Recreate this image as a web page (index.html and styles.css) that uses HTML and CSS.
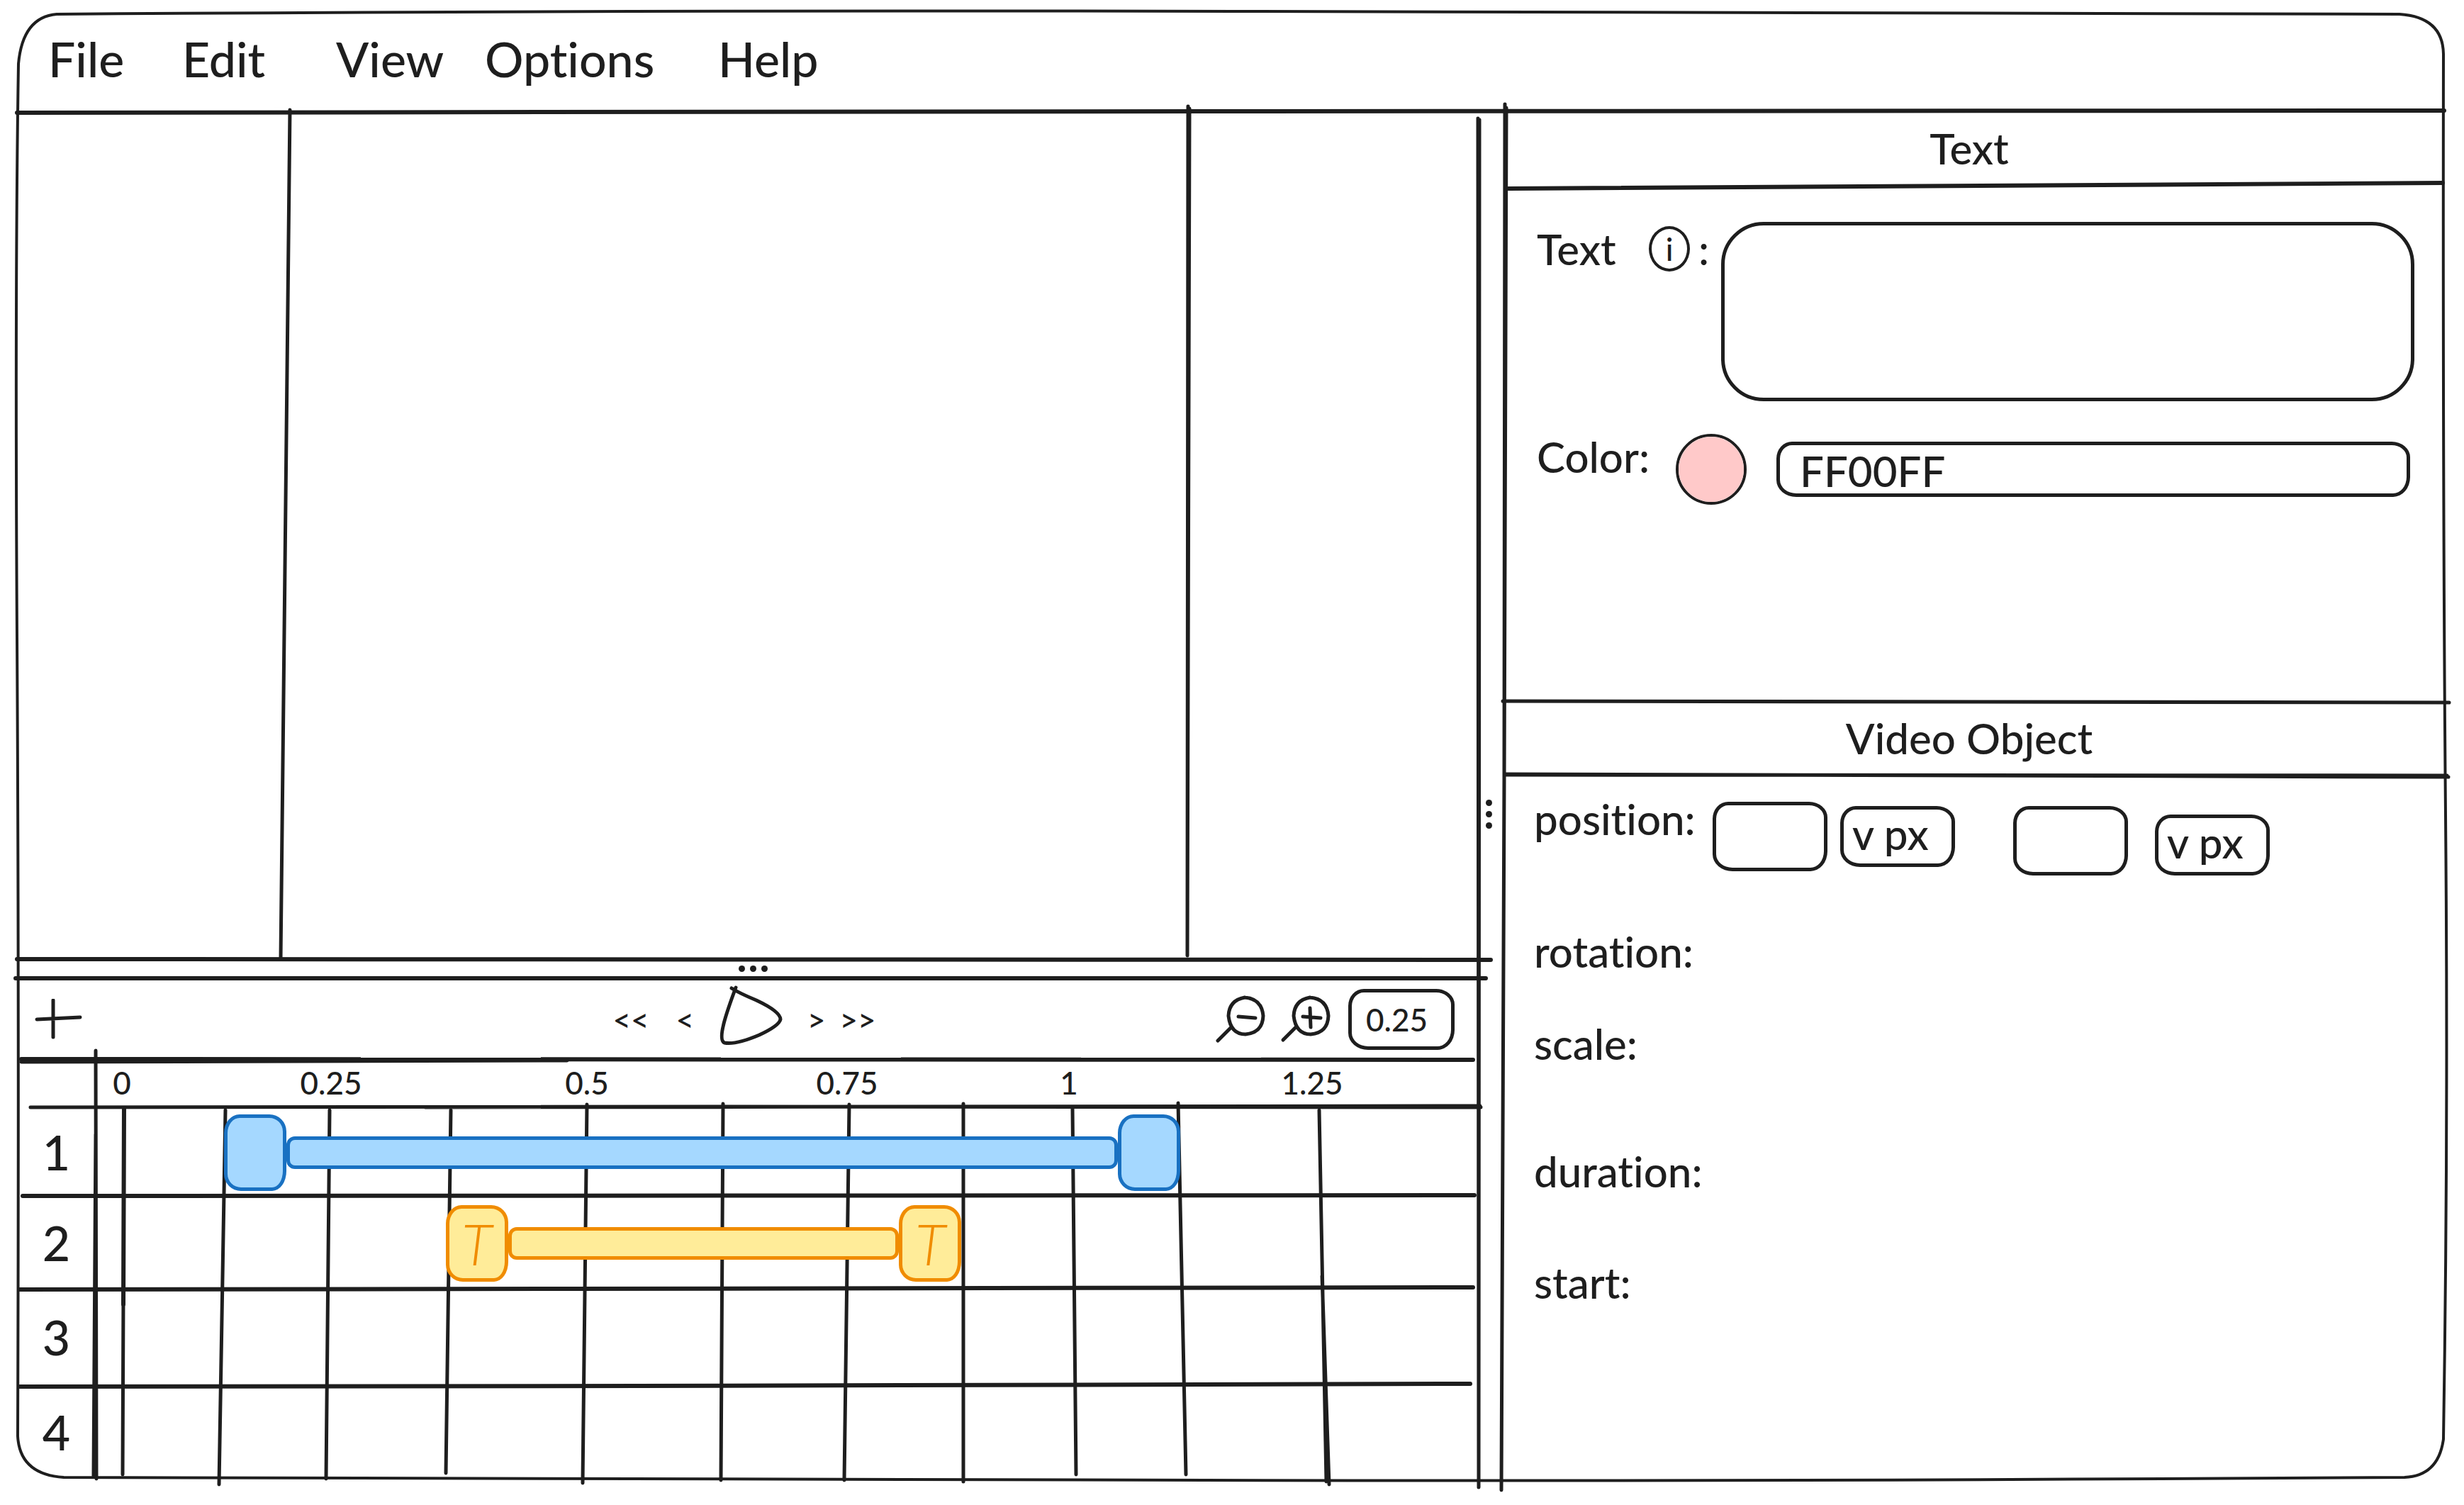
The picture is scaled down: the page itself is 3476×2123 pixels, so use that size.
FILE: index.html
```html
<!DOCTYPE html>
<html lang="en">
<head>
<meta charset="utf-8">
<title>Video editor</title>
<link rel="stylesheet" href="styles.css">
</head>
<body>
<div class="app">
  <svg class="ink" viewBox="24 18 3426 2068" preserveAspectRatio="none" aria-hidden="true">
    <path class="line-thin" d="M80 20 Q900 14 1740 16 T3385 20 Q3446 24 3447 76 Q3446 700 3450 1150 T3447 2030 Q3440 2082 3392 2084 Q2500 2090 1700 2088 T90 2084 Q28 2080 25 2026 Q27 1400 24 900 T26 90 Q32 24 80 20"/>
  </svg>

  <nav class="menu" aria-label="Main">
    <button type="button">File</button>
    <button type="button">Edit</button>
    <button type="button">View</button>
    <button type="button">Options</button>
    <button type="button">Help</button>
  </nav>

  <main class="workspace">
    <svg class="ink" viewBox="24 157 3426 1929" preserveAspectRatio="none" aria-hidden="true">
      <path class="line-thick" d="M24 159 L1700 157 L3448 156"/>
      <path class="line" d="M2085 167 L2086 2098 M2087 169 L2086 2098"/>
      <path class="line" d="M2123 147 L2122 1100 L2118 2102 M2125 152 L2122 1100"/>
    </svg>

    <div class="left">
      <section class="preview" aria-label="Preview">
        <svg class="ink" viewBox="24 157 2062 1196" preserveAspectRatio="none" aria-hidden="true">
          <path class="line" d="M409 155 L396 1352 M1676 150 L1675 1348 M1678 153 L1675 1348"/>
        </svg>
      </section>

      <div class="splitter splitter-row" role="separator" aria-orientation="horizontal">
        <svg class="ink" viewBox="24 1353 2062 27" preserveAspectRatio="none" aria-hidden="true">
          <path class="line-thick" d="M24 1353 L2103 1354 M22 1380 L2096 1380"/>
        </svg>
        <i></i><i></i><i></i>
      </div>

      <section class="timeline" aria-label="Timeline">
        <svg class="ink" viewBox="24 1380 2062 706" preserveAspectRatio="none" aria-hidden="true">
          <path class="line-thick" d="M30 1494 L2078 1495"/>
          <path class="line" d="M30 1498 L800 1496"/>
          <path class="line" d="M43 1562 L1000 1561 L2089 1562 M600 1562 L2088 1560"/>
          <path class="line-thick" d="M32 1687 L2080 1686"/>
          <path class="line-thick" d="M28 1819 L800 1818 L2078 1816"/>
          <path class="line-thick" d="M28 1956 L900 1955 L2074 1952"/>
          <path class="line" d="M135 1482 L136 2086 M135 1600 L132 2082"/>
          <path class="line-thick" d="M175 1564 L174 1840"/>
          <path class="line" d="M174 1830 L173 2080"/>
          <path class="line" d="M318 1566 L309 2094 M465 1566 L460 2086 M636 1566 L629 2078 M828 1558 L822 2092 M1020 1557 L1017 2088 M1198 1558 L1191 2088 M1359 1557 L1359 2090 M1513 1564 L1518 2080 M1662 1556 L1673 2080 M1861 1566 L1871 2090 M1865 1800 L1875 2094"/>
        </svg>

        <div class="toolbar">
          <button type="button" aria-label="Add track" class="add">
            <svg width="68" height="58" viewBox="0 0 68 58"><path class="line" d="M4 29 L65 26 M27 2 L27 54"/></svg>
          </button>
          <div class="transport">
            <div class="back">
              <button type="button">&lt;&lt;</button>
              <button type="button">&lt;</button>
            </div>
            <button type="button" aria-label="Play">
              <svg width="92" height="96" viewBox="0 0 92 96"><path class="line" d="M19 4 Q30 11 54 21 Q88 37 88 48 Q86 57 58 70 Q25 84 9 81 Q2 78 8 54 Q12 38 25 3"/></svg>
            </button>
            <div class="forward">
              <button type="button">&gt;</button>
              <button type="button">&gt;&gt;</button>
            </div>
          </div>
          <div class="zoom">
            <button type="button" aria-label="Zoom out">
              <svg width="72" height="70" viewBox="0 0 72 70"><path class="line" d="M42 4 Q20 8 19 30 Q22 56 43 56 Q67 54 68 30 Q66 6 42 4 M23 46 L4 65 M33 31 L57 33"/></svg>
            </button>
            <button type="button" aria-label="Zoom in">
              <svg width="72" height="70" viewBox="0 0 72 70"><path class="line" d="M42 4 Q20 8 19 30 Q22 56 43 56 Q67 54 68 30 Q66 6 42 4 M23 45 L4 64 M32 31 L57 33 M42 19 L43 46"/></svg>
            </button>
            <input class="box zoom-step" type="text" value="0.25" aria-label="Zoom step">
          </div>
        </div>

        <div class="ruler">
          <span>0</span><span>0.25</span><span>0.5</span><span>0.75</span><span>1</span><span>1.25</span>
        </div>

        <div class="track">
          <span class="track-number">1</span>
          <div class="lane">
            <div class="clip clip-video" style="margin-left:9.3%;width:69.1%">
              <button type="button" class="handle" aria-label="Clip start"></button>
              <span class="bar"></span>
              <button type="button" class="handle" aria-label="Clip end"></button>
            </div>
          </div>
        </div>
        <div class="track">
          <span class="track-number">2</span>
          <div class="lane">
            <div class="clip clip-text" style="margin-left:25.3%;width:37.3%">
              <button type="button" class="handle">T</button>
              <span class="bar"></span>
              <button type="button" class="handle">T</button>
            </div>
          </div>
        </div>
        <div class="track"><span class="track-number">3</span><div class="lane"></div></div>
        <div class="track"><span class="track-number">4</span><div class="lane"></div></div>
      </section>
    </div>

    <div class="splitter splitter-column" role="separator" aria-orientation="vertical">
      <i></i><i></i><i></i>
    </div>

    <aside class="inspector">
      <section class="text-panel">
        <h2>Text
          <svg class="ink" viewBox="2122 157 1328 105" preserveAspectRatio="none" aria-hidden="true">
            <path class="line-thick" d="M2128 267 L3446 259"/>
          </svg>
        </h2>
        <div class="text-fields">
          <div class="field">
            <span class="label-group"><label for="content">Text</label><button type="button" class="info">i</button><span>:</span></span>
            <textarea id="content" class="box"></textarea>
          </div>
          <div class="field">
            <label class="color-label" for="hex">Color:</label>
            <input class="swatch" type="color" value="#ffc9c9" aria-label="Pick color">
            <input class="box hex" id="hex" type="text" value="FF00FF">
          </div>
        </div>
      </section>

      <section class="object-panel">
        <h2>Video Object
          <svg class="ink" viewBox="2122 989 1328 102" preserveAspectRatio="none" aria-hidden="true">
            <path class="line" d="M2120 989 L3455 991 M2124 1090 L3454 1094 M2124 1091 L3452 1092"/>
          </svg>
        </h2>
        <div class="object-fields">
          <div class="field">
            <label for="pos-x">position:</label>
            <div class="pair">
              <input class="box" id="pos-x" type="text">
              <select class="box" aria-label="Horizontal unit"><option>v px</option></select>
            </div>
            <div class="pair pair-low">
              <input class="box" type="text" aria-label="Vertical position">
              <select class="box" aria-label="Vertical unit"><option>v px</option></select>
            </div>
          </div>
          <div class="field"><span>rotation:</span></div>
          <div class="field"><span>scale:</span></div>
          <div class="field"><span>duration:</span></div>
          <div class="field"><span>start:</span></div>
        </div>
      </section>
    </aside>
  </main>
</div>
</body>
</html>
```
FILE: styles.css
```css
:root {
  --ink: #1e1e1e;
  --hand: Lato, "Open Sans", sans-serif;
}

* { box-sizing: border-box; }

body {
  margin: 0;
  background: #fff;
  color: var(--ink);
  font: 500 60px/64px var(--hand);
  font-variant-ligatures: none;
}

button, input, select, textarea {
  margin: 0;
  padding: 0;
  border: 0;
  background: none;
  color: inherit;
  font: inherit;
  font-variant-ligatures: none;
}

button { display: block; }
button svg { display: block; }

/* Hand-drawn rules, laid behind each region's content */
.ink {
  position: absolute;
  inset: 0;
  width: 100%;
  height: 100%;
  overflow: visible;
  pointer-events: none;
}

.line, .line-thin, .line-thick {
  fill: none;
  stroke: var(--ink);
  stroke-width: 5px;
  stroke-linecap: round;
  stroke-linejoin: round;
}
.line-thin { stroke-width: 4px; }
.line-thick { stroke-width: 6px; }

.app {
  position: relative;
  display: grid;
  grid-template-rows: 139px 1fr;
  min-height: calc(100vh - 55px);
  margin: 18px 26px 37px 24px;
}

.menu {
  position: relative;
  display: grid;
  grid-template-columns: 189px 217px 210px 329px auto;
  justify-content: start;
  justify-items: start;
  align-items: center;
  padding: 0 44px 10px;
  font-size: 68px;
  line-height: 88px;
}

.workspace {
  position: relative;
  display: grid;
  grid-template-columns: minmax(0, 2062fr) 36px minmax(0, 1328fr);
}

.left {
  display: grid;
  grid-template-rows: 1fr 27px auto;
}

.preview { position: relative; }

.splitter {
  position: relative;
  display: flex;
  align-items: center;
  justify-content: center;
  gap: 7px;
}
.splitter i {
  width: 9px;
  height: 9px;
  border-radius: 50%;
  background: var(--ink);
}
.splitter-row { padding-left: 14px; }
.splitter-column {
  flex-direction: column;
  padding: 54px 8px 0 0;
}

.timeline {
  position: relative;
  display: grid;
  grid-template-rows: 115px 68px 124px 131px 135px 133px;
}

.toolbar {
  position: relative;
  display: grid;
  grid-template-columns: 1fr auto 1fr;
  align-items: center;
  padding: 0 34px 0 24px;
  font-size: 44px;
}

.transport, .back, .forward {
  display: flex;
  align-items: center;
}
.transport { gap: 34px; }
.back { gap: 38px; }
.forward { gap: 20px; }

.zoom {
  display: flex;
  align-items: center;
  justify-content: flex-end;
  gap: 20px;
}

.box {
  min-width: 0;
  border: 5px solid var(--ink);
  border-radius: 22px 26px 24px 28px / 24px 22px 28px 24px;
}

.zoom-step {
  width: 150px;
  height: 86px;
  margin-left: 4px;
  padding: 0 20px;
}

.ruler {
  position: relative;
  display: grid;
  grid-template-columns:
    12fr 50fr 220fr 100fr 261fr 100fr 267fr 100fr 213fr 100fr 243fr 100fr 185fr;
  padding: 0 0 4px 111px;
  align-items: center;
  justify-items: center;
  font-size: 44px;
}
.ruler span:nth-child(1) { grid-column: 2; }
.ruler span:nth-child(2) { grid-column: 4; }
.ruler span:nth-child(3) { grid-column: 6; }
.ruler span:nth-child(4) { grid-column: 8; }
.ruler span:nth-child(5) { grid-column: 10; }
.ruler span:nth-child(6) { grid-column: 12; }

.track {
  position: relative;
  display: grid;
  grid-template-columns: 111px 1fr;
  align-items: center;
}
.track-number {
  text-align: center;
  font-size: 68px;
}

.clip {
  display: flex;
  align-items: center;
  padding-top: 2px;
}
.handle {
  flex: none;
  width: 88px;
  height: 108px;
  border: 5px solid;
  border-radius: 22px 24px 20px 24px / 26px 24px 28px 24px;
  font-size: 80px;
  font-style: italic;
  font-weight: 300;
}
.bar {
  flex: 1;
  height: 46px;
  border: 5px solid;
  border-radius: 12px;
}
.clip-video .handle, .clip-video .bar {
  border-color: #1971c2;
  background: #a5d8ff;
}
.clip-text .handle, .clip-text .bar {
  border-color: #f08c00;
  background: #ffec99;
  color: #f08c00;
}

.inspector {
  display: grid;
  grid-template-rows: 832px 1fr;
}

h2 {
  position: relative;
  display: flex;
  align-items: center;
  justify-content: center;
  height: 104px;
  margin: 0;
  padding-right: 16px;
  font: inherit;
}

.text-fields {
  display: grid;
  gap: 46px;
  padding: 52px 44px 0 46px;
}

.field {
  display: flex;
  align-items: flex-start;
}

.label-group {
  display: grid;
  grid-template-columns: 146px 58px auto;
  justify-content: start;
  align-items: center;
  column-gap: 12px;
  flex: none;
  width: 260px;
  padding-top: 6px;
}
.info {
  width: 58px;
  height: 64px;
  border: 4px solid var(--ink);
  border-radius: 50%;
  font-size: 44px;
  line-height: 52px;
}
textarea.box {
  flex: 1;
  height: 253px;
  padding: 20px 32px;
  border-radius: 60px;
  resize: none;
}

.color-label {
  flex: none;
  width: 196px;
}
.swatch {
  flex: none;
  width: 100px;
  height: 100px;
  margin-right: 42px;
  border: 4px solid var(--ink);
  border-radius: 50%;
  background: #ffc9c9;
  overflow: hidden;
}
.swatch::-webkit-color-swatch-wrapper { padding: 0; }
.swatch::-webkit-color-swatch { border: 0; }
.hex {
  flex: 1;
  align-self: center;
  height: 78px;
  margin-right: 6px;
  padding: 4px 28px 0;
}

.object-fields {
  display: grid;
  grid-template-rows: 187px 130px 180px 157px 64px;
  padding: 30px 44px 0 42px;
}
.object-fields label {
  flex: none;
  width: 252px;
}

.pair {
  display: flex;
  align-items: center;
  gap: 18px;
  margin: 8px 82px 0 0;
}
.pair-low {
  align-items: flex-end;
  gap: 38px;
  margin-top: 14px;
}
.pair input {
  width: 162px;
  height: 98px;
}
.pair select {
  appearance: none;
  width: 162px;
  height: 86px;
  padding: 0 12px 8px;
}
```
